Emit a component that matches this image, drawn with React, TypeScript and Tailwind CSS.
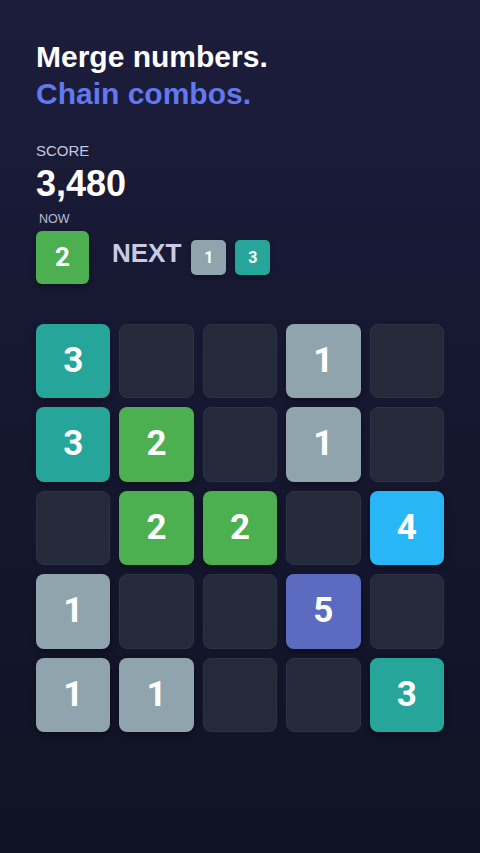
import React from "react";

type T = 0 | 1 | 2 | 3 | 4 | 5;

const colors: Record<number, string> = {
  1: "bg-[#90a4ae]",
  2: "bg-[#4caf50]",
  3: "bg-[#26a69a]",
  4: "bg-[#29b6f6]",
  5: "bg-[#5c6bc0]",
};

const board: T[][] = [
  [3, 0, 0, 1, 0],
  [3, 2, 0, 1, 0],
  [0, 2, 2, 0, 4],
  [1, 0, 0, 5, 0],
  [1, 1, 0, 0, 3],
];

function Cell({ v }: { v: T }) {
  if (v === 0) {
    return (
      <div className="aspect-square rounded-[8px] bg-[#252a3b] border border-[#2d3244]" />
    );
  }
  return (
    <div
      className={`aspect-square rounded-[8px] ${colors[v]} flex items-center justify-center text-white text-[35px] font-bold shadow-[0_3px_6px_rgba(0,0,0,0.35)] font-['Roboto',sans-serif]`}
    >
      {v}
    </div>
  );
}

export default function App() {
  return (
    <div className="min-h-[853px] w-full bg-gradient-to-b from-[#1b1d3b] to-[#101225] font-['Liberation_Sans',Arial,sans-serif] text-white px-9 pt-[38px]">
      <h1 className="text-[30px] leading-[37px] font-bold">
        <div className="text-white">Merge numbers.</div>
        <div className="text-[#6378ec]">Chain combos.</div>
      </h1>
      <div className="mt-[30px] text-[15px] leading-[18px] text-[#c5c8e0]">SCORE</div>
      <div className="mt-[4px] text-[36px] leading-[40px] font-bold">3,480</div>
      <div className="mt-[8px] flex items-end">
        <div className="flex flex-col">
          <div className="pl-[3px] text-[12.5px] leading-[15px] text-[#b8bcd2]">NOW</div>
          <div className="mt-[4px] w-[53px] h-[53px] rounded-[6px] bg-[#4caf50] flex items-center justify-center text-[26px] font-bold shadow-[0_3px_6px_rgba(0,0,0,0.35)] font-['Roboto',sans-serif]">
            2
          </div>
        </div>
        <div className="ml-[23px] h-[53px] flex items-center">
          <span className="text-[26px] font-bold text-[#c8cbe2] leading-none -mt-[9px]">NEXT</span>
          <div className="ml-[10px] w-[35px] h-[35px] rounded-[5px] bg-[#90a4ae] flex items-center justify-center text-[16px] font-bold shadow-[0_3px_5px_rgba(0,0,0,0.35)] font-['Roboto',sans-serif]">
            1
          </div>
          <div className="ml-[9px] w-[35px] h-[35px] rounded-[5px] bg-[#26a69a] flex items-center justify-center text-[16px] font-bold shadow-[0_3px_5px_rgba(0,0,0,0.35)] font-['Roboto',sans-serif]">
            3
          </div>
        </div>
      </div>
      <div className="mt-[40px] grid grid-cols-5 gap-[9px] w-[408px]">
        {board.flat().map((v, i) => (
          <Cell key={i} v={v} />
        ))}
      </div>
    </div>
  );
}
